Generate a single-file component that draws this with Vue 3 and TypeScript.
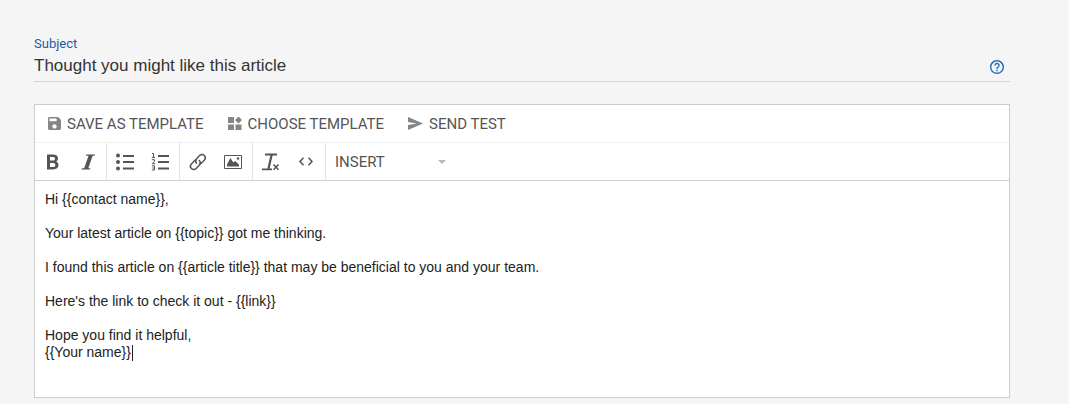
<script setup lang="ts">
import { ref } from 'vue'

const subject = ref<string>('Thought you might like this article')
const lines: string[] = [
  'Hi {{contact name}},',
  '',
  'Your latest article on {{topic}} got me thinking.',
  '',
  'I found this article on {{article title}} that may be beneficial to you and your team.',
  '',
  "Here's the link to check it out - {{link}}",
  '',
  'Hope you find it helpful,',
  '{{Your name}}',
]
const message = ref<string>(lines.join('\n'))
const insert = ref<string>('INSERT')
</script>

<template>
  <main class="page">
    <div class="subject">
      <label class="subject-label" for="subject">Subject</label>
      <div class="subject-row">
        <input id="subject" v-model="subject" class="subject-input" type="text" />
        <button class="help" type="button" aria-label="Help">
          <svg viewBox="2 2 20 20" width="14" height="14" fill="currentColor">
            <path d="M11 18h2v-2h-2v2zm1-16C6.48 2 2 6.48 2 12s4.480 10 10 10 10-4.480 10-10S17.520 2 12 2zm0 18c-4.410 0-8-3.590-8-8s3.590-8 8-8 8 3.590 8 8-3.590 8-8 8zm0-14c-2.210 0-4 1.790-4 4h2c0-1.100.9-2 2-2s2 .9 2 2c0 2-3 1.750-3 5h2c0-2.250 3-2.500 3-5 0-2.210-1.790-4-4-4z" />
          </svg>
        </button>
      </div>
    </div>

    <section class="editor">
      <div class="actions">
        <button class="action" type="button">
          <svg class="action-icon" viewBox="3 3 18 18" width="13" height="13">
            <path d="M17 3H5c-1.110 0-2 .9-2 2v14c0 1.100.89 2 2 2h14c1.100 0 2-.9 2-2V7l-4-4zm-5 16c-1.660 0-3-1.340-3-3s1.340-3 3-3 3 1.340 3 3-1.340 3-3 3zm3-10H5V5h10v4z" />
          </svg>
          <span>SAVE AS TEMPLATE</span>
        </button>
        <button class="action" type="button">
          <svg class="action-icon" viewBox="0 0 14 14" width="14" height="14">
            <path d="M0 0h6v6H0zM0 7.500h6V13H0zM7.500 7.500h6V13h-6zM10.500 -.5L14 3l-3.500 3.500L7 3z" />
          </svg>
          <span>CHOOSE TEMPLATE</span>
        </button>
        <button class="action" type="button">
          <svg class="action-icon" viewBox="0 0 15 13" width="15" height="13">
            <path d="M0 0L15 6.500 0 13V8L9 6.500 0 5z" />
          </svg>
          <span>SEND TEST</span>
        </button>
      </div>

      <div class="tools">
        <div class="group">
          <button class="tool" type="button" aria-label="Bold">
            <svg viewBox="0 0 20 20" width="20" height="20" fill="currentColor" fill-rule="evenodd">
              <path d="M4 2.500h6c3.300 0 5 1.400 5 3.900 0 1.500-.8 2.600-2.100 3.200 1.700.5 2.600 1.800 2.600 3.500 0 2.800-1.900 4.400-5.300 4.400H4zM7 5v3.600h2.800c1.500 0 2.200-.6 2.200-1.800S11.300 5 9.800 5zM7 10.900V15h3c1.600 0 2.400-.7 2.400-2.100 0-1.300-.8-2-2.400-2z" />
            </svg>
          </button>
          <button class="tool" type="button" aria-label="Italic">
            <svg viewBox="0 0 20 20" width="20" height="20" fill="currentColor">
              <path d="M8.400 2.500H17l-.4 1.300h-2L10.300 16.200h2.100L12 17.500H3.500l.4-1.300h2.300L10.500 3.800H8z" />
            </svg>
          </button>
        </div>
        <div class="group">
          <button class="tool" type="button" aria-label="Bulleted list">
            <svg viewBox="0 0 20 20" width="20" height="20" fill="currentColor">
              <circle cx="3" cy="3.500" r="2" /><circle cx="3" cy="10" r="2" /><circle cx="3" cy="16.500" r="2" />
              <path d="M8 3h11v2H8zM8 9h11v2H8zM8 15.500h11v2H8z" />
            </svg>
          </button>
          <button class="tool" type="button" aria-label="Numbered list">
            <svg viewBox="0 0 20 20" width="20" height="20" fill="currentColor">
              <path d="M8 3h11v2H8zM8 9h11v2H8zM8 15.500h11v2H8z" />
              <path d="M2 1.500h1.500v4M1.800 5.500h3.200M1.800 7.700h2.700v1.600L2.200 11.700H5M1.800 13.800h2.700v4.200H1.800M2.300 16h2.200" fill="none" stroke="currentColor" />
            </svg>
          </button>
        </div>
        <div class="group">
          <button class="tool" type="button" aria-label="Insert link">
            <svg viewBox="0 0 20 20" width="20" height="20" fill="none" stroke="currentColor" stroke-width="1.500" stroke-linecap="round">
              <path d="M8.500 11.200a3.300 3.300 0 0 1 .1-4.500l3-3.100a3.200 3.200 0 0 1 4.700 0 3.300 3.300 0 0 1 0 4.600l-3 3.100a3.200 3.200 0 0 1-1.800.9" />
              <path d="M11.300 8.600a3.300 3.300 0 0 1 0 4.600l-3.200 3.300a3.200 3.200 0 0 1-4.700 0 3.300 3.300 0 0 1 0-4.600l3-3.100a3.200 3.200 0 0 1 1.800-.9" />
            </svg>
          </button>
          <button class="tool" type="button" aria-label="Insert image">
            <svg viewBox="0 0 20 20" width="20" height="20">
              <path d="M1.500 3.500h17v13h-17z" fill="none" stroke="currentColor" />
              <path d="M4 14.500V12.500L7.400 6l3 4.500 1.700-1.500L16 12.500v2z" fill="currentColor" />
              <circle cx="15" cy="6.500" r="1.300" fill="currentColor" />
            </svg>
          </button>
        </div>
        <div class="group">
          <button class="tool" type="button" aria-label="Clear formatting">
            <svg viewBox="0 0 20 20" width="20" height="20" fill="none" stroke="currentColor">
              <path d="M4 2.500H16M1 17.300h10" stroke-width="1.800" />
              <path d="M10.700 2.500L7.400 17" stroke-width="2.200" />
              <path d="M12.500 12.500l5 5.200M17.500 12.500l-5 5.200" stroke-width="1.500" />
            </svg>
          </button>
          <button class="tool" type="button" aria-label="Source code">
            <svg viewBox="0 0 20 20" width="20" height="20" fill="none" stroke="currentColor" stroke-width="1.500">
              <path d="M7.500 5.800L4 9.500l3.500 3.700M12.500 5.800L16 9.500l-3.500 3.700" />
            </svg>
          </button>
        </div>
        <div class="insert">
          <select v-model="insert" class="insert-select" aria-label="Insert">
            <option>INSERT</option>
          </select>
          <svg class="arrow" viewBox="0 0 8 4" width="8" height="4"><path d="M0 0h8L4 4z" fill="currentColor" /></svg>
        </div>
      </div>

      <div class="body">
        <textarea v-model="message" class="message" rows="11" aria-label="Message" spellcheck="false"></textarea>
        <span class="caret"></span>
      </div>
    </section>
  </main>
</template>

<style>
body {
  background: #fff;
}
</style>

<style scoped>
.page {
  box-sizing: border-box;
  padding: 36px 59px 6px 34px;
  background: #f5f5f5;
  font-family: "Liberation Sans", Arial, sans-serif;
}

button,
input,
select,
textarea {
  box-sizing: border-box;
  margin: 0;
  padding: 0;
  border: 0;
  border-radius: 0;
  outline: 0;
  background: transparent;
  font-family: inherit;
}

svg {
  display: block;
}

.subject {
  margin-bottom: 22px;
  border-bottom: 1px solid #d4d4d4;
}

.subject-label {
  display: block;
  color: #1c5ba8;
  font-family: Roboto, sans-serif;
  font-size: 13px;
  line-height: 16px;
}

.subject-row {
  display: flex;
  align-items: center;
  gap: 8px;
  padding-right: 6px;
}

.subject-input {
  flex: 1;
  min-width: 0;
  height: 29px;
  padding-bottom: 2px;
  color: #333;
  font-size: 17px;
}

.help {
  color: #1c6fc0;
}

.editor {
  border: 1px solid #ccc;
  background: #fff;
}

.actions {
  display: flex;
  gap: 24px;
  align-items: center;
  height: 37px;
  padding-left: 13px;
  border-bottom: 1px solid #f0f0f0;
}

.action {
  display: flex;
  align-items: center;
  gap: 6px;
  color: #555;
  font-family: Roboto, sans-serif;
  font-size: 15px;
  line-height: 20px;
  white-space: nowrap;
}

.action-icon {
  fill: #858585;
}

.tools {
  display: flex;
  height: 37px;
  border-bottom: 1px solid #d0d0d0;
}

.group {
  display: flex;
  align-items: center;
  gap: 15px;
  padding: 0 9px 0 8px;
  border-right: 1px solid #e2e2e2;
}

.group:first-child {
  padding-right: 8px;
}

.tool {
  color: #555;
}

.insert {
  display: flex;
  align-items: center;
  position: relative;
  width: 126px;
}

.insert-select {
  appearance: none;
  width: 100%;
  height: 100%;
  padding-left: 9px;
  color: #555;
  font-family: Roboto, sans-serif;
  font-size: 15px;
}

.arrow {
  position: absolute;
  right: 6px;
  color: #b4b8c4;
  pointer-events: none;
}

.body {
  position: relative;
}

.message {
  display: block;
  width: 100%;
  padding: 10px 10px 19px;
  color: #222;
  font-size: 14px;
  line-height: 17px;
  resize: none;
  overflow: hidden;
}

.caret {
  position: absolute;
  top: 164px;
  left: 97px;
  width: 1px;
  height: 16px;
  background: #222;
}
</style>
